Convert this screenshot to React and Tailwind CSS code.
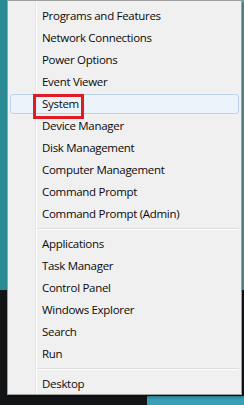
import React from "react";

const groups = [
  [
    "Programs and Features",
    "Network Connections",
    "Power Options",
    "Event Viewer",
    "System",
    "Device Manager",
    "Disk Management",
    "Computer Management",
    "Command Prompt",
    "Command Prompt (Admin)",
  ],
  ["Applications", "Task Manager", "Control Panel", "Windows Explorer", "Search", "Run"],
  ["Desktop"],
];

function Item({ label }) {
  const active = label === "System";
  return (
    <div className="relative h-[22px] px-[2px] py-[1px]">
      <div
        className={
          "flex h-full items-center rounded-[3px] border pl-[31px] " +
          (active ? "border-[#bcd3ee] bg-[#edf3fb]" : "border-transparent")
        }
      >
        <span className="text-[11.5px] leading-none tracking-[-0.3px] text-[#0a0a0a]">{label}</span>
      </div>
      {active && (
        // annotation frame drawn over the item
        <div className="absolute left-[25px] top-[1px] h-[25px] w-[51px] border-[3px] border-[#e01b24]" />
      )}
    </div>
  );
}

function Separator() {
  return (
    <div className="flex h-[8px] items-center pl-[29px] pr-[2px]">
      <div className="h-[2px] w-full border-t border-b border-t-[#dcdcdc] border-b-white" />
    </div>
  );
}

export default function App() {
  return (
    <div
      className="relative h-[405px] w-[244px] overflow-hidden bg-[#121416]"
      style={{ fontFamily: '"Open Sans", "Segoe UI", sans-serif' }}
    >
      {/* desktop behind the menu */}
      <div className="h-[290px] bg-[#2a8b95]" />
      <div className="flex h-[115px] items-end justify-end">
        <div className="h-[9px] w-[97px] bg-[#3a9fb5]" />
      </div>
      <div className="absolute right-0 top-0 h-[290px] w-[2px] bg-[#6fa8ae]" />

      {/* context menu */}
      <div className="absolute left-[7px] top-0 h-[395px] w-[235px] border border-[#a0a0a0] bg-[#f0f0f0] shadow-[2px_2px_3px_rgba(0,0,0,0.35)]">
        <div className="absolute bottom-0 left-[27px] top-0 w-[2px] border-l border-r border-l-[#e2e3e3] border-r-white" />
        <div className="relative flex flex-col pt-[4px]">
          {groups.map((g, gi) => (
            <React.Fragment key={gi}>
              {gi > 0 && <Separator />}
              {g.map((l) => (
                <Item key={l} label={l} />
              ))}
            </React.Fragment>
          ))}
        </div>
      </div>
    </div>
  );
}
